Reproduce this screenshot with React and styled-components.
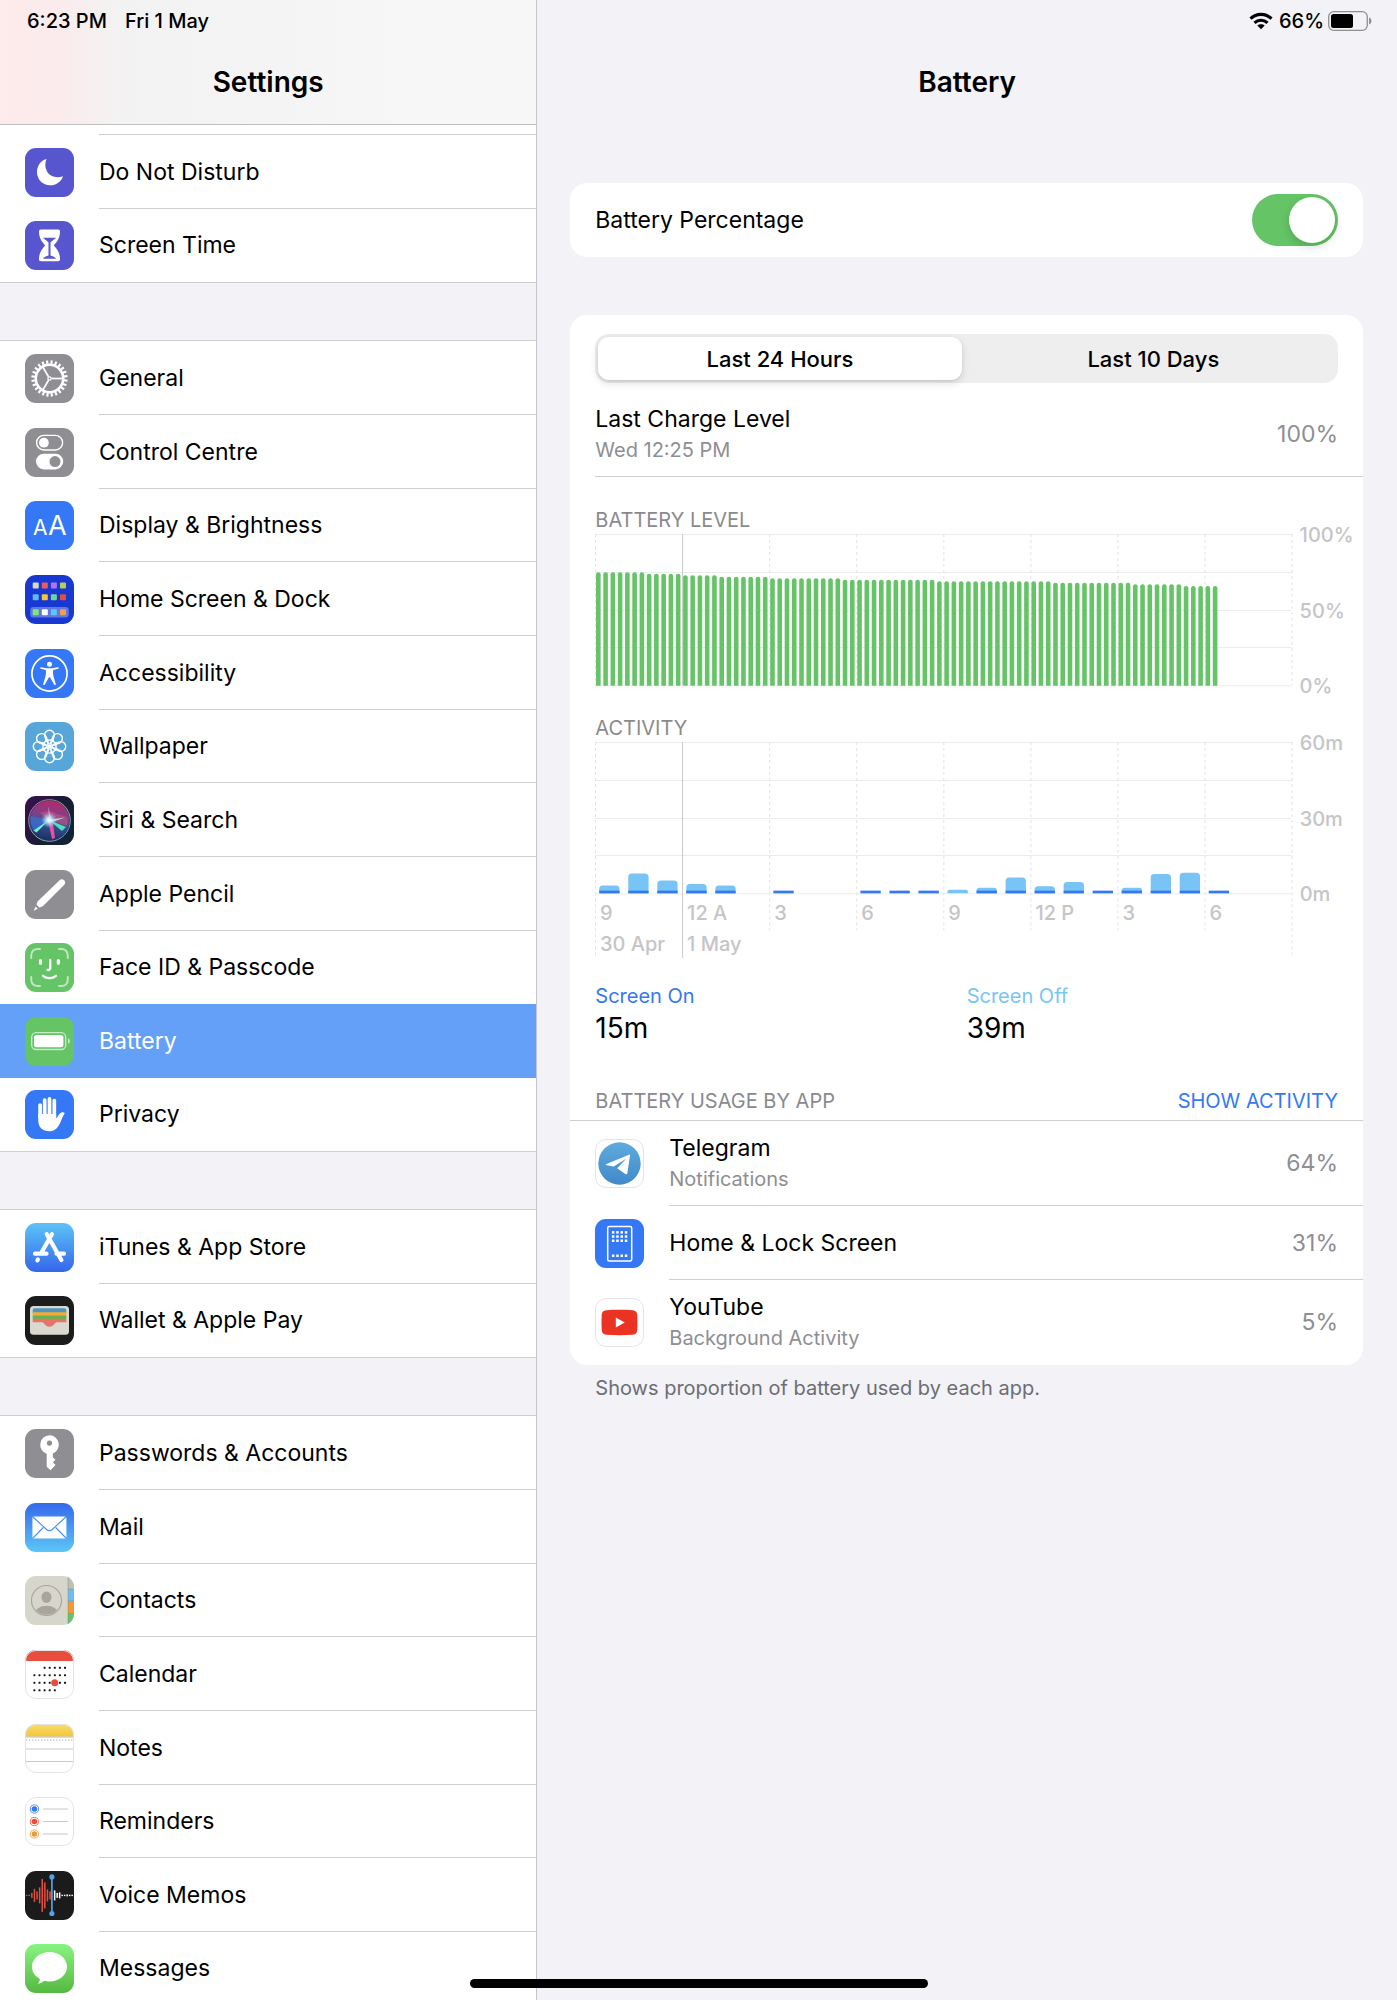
import React, { useState } from "react";
import styled, { createGlobalStyle, css } from "styled-components";

const color = {
  page: "#f2f2f7",
  card: "#ffffff",
  line: "#cfcfd2",
  text: "#000000",
  muted: "#8e8e93",
  axis: "#c5c5c8",
  blue: "#3478f6",
  sky: "#78c5f5",
  green: "#65c466",
  grey: "#8e8e93",
  indigo: "#5856ce",
};

const GlobalStyle = createGlobalStyle`
  *, *::before, *::after { box-sizing: border-box; }
  html, body, #root { height: 100%; }
  body {
    margin: 0;
    background: ${color.page};
    color: ${color.text};
    font-family: Inter, "Liberation Sans", sans-serif;
    font-size: 23px;
    line-height: 32px;
    -webkit-font-smoothing: antialiased;
  }
  h1, h2, p, ul { margin: 0; padding: 0; font: inherit; }
  ul { list-style: none; }
  button { border: 0; padding: 0; background: none; font: inherit; color: inherit; cursor: pointer; }
  a { color: inherit; text-decoration: none; }
`;

/* ---------- icons ---------- */

const IconSvg = styled.svg`
  display: block;
  flex: none;
  width: 49px;
  height: 49px;
`;

function Tile({ fill, border, children }) {
  return (
    <IconSvg viewBox="0 0 49 49" aria-hidden="true">
      <rect width="49" height="49" rx="11" fill={fill} />
      {children}
      {border && (
        <rect x="0.5" y="0.5" width="48" height="48" rx="10.5" fill="none" stroke="#e4e4e6" />
      )}
    </IconSvg>
  );
}

function Fade({ id, from, to }) {
  return (
    <defs>
      <linearGradient id={id} x1="0" y1="0" x2="0" y2="1">
        <stop offset="0" stopColor={from} />
        <stop offset="1" stopColor={to} />
      </linearGradient>
    </defs>
  );
}

function RoundClip({ id }) {
  return (
    <defs>
      <clipPath id={id}>
        <rect width="49" height="49" rx="11" />
      </clipPath>
    </defs>
  );
}

const range = (n) => Array.from({ length: n }, (_, i) => i);

const MoonIcon = () => (
  <Tile fill={color.indigo}>
    <path
      fill="#fff"
      d="M21.5 11C15.5 12.5 12 18 12 24c0 7.500 5.800 13.300 13.200 13.300 5.800 0 11.100-3.700 12.800-9.100-6.500 2.300-13.500.3-16.200-5.200-2-4-1.900-8.200-.3-12z"
    />
  </Tile>
);

const HourglassIcon = () => (
  <Tile fill={color.indigo}>
    <path
      fill="#fff"
      d="M16 8.500h17c1.400 0 2 .8 2 2 0 6-2.200 9.500-6.200 13.900 4 4.300 6.200 7.800 6.200 13.900 0 1.200-.6 2-2 2H16c-1.400 0-2-.8-2-2 0-6.100 2.200-9.600 6.200-13.900-4-4.400-6.200-7.900-6.200-13.900 0-1.200.6-2 2-2z"
    />
    <path
      fill={color.indigo}
      d="M18 16.800h13c-1 1.600-3.600 2.400-5.500 4.700v13c2 .8 4.700 1.400 5.500 3.200H18c.8-1.800 3.500-2.400 5.500-3.200v-13c-1.900-2.300-4.500-3.100-5.500-4.700z"
    />
  </Tile>
);

const GearIcon = () => (
  <Tile fill={color.grey}>
    <g stroke="#fff" fill="none">
      <circle cx="24.500" cy="24.500" r="13.700" strokeWidth="2.600" />
      {range(24).map((i) => (
        <path
          key={i}
          d="M24.500 10.500V6.300"
          strokeWidth="2.200"
          transform={`rotate(${i * 15 + 7} 24.500 24.500)`}
        />
      ))}
      {[90, 210, 330].map((a) => (
        <path
          key={a}
          d="M24.500 22.500V11.500"
          strokeWidth="1.700"
          transform={`rotate(${a} 24.500 24.500)`}
        />
      ))}
      <circle cx="24.500" cy="24.500" r="1.600" strokeWidth="1.300" />
    </g>
  </Tile>
);

const ControlCentreIcon = () => (
  <Tile fill={color.grey}>
    <rect x="11.600" y="7.400" width="26" height="14.600" rx="7.300" fill="none" stroke="#fff" strokeWidth="1.400" />
    <circle cx="18.900" cy="14.700" r="4.900" fill="#fff" />
    <rect x="11" y="25.800" width="27.200" height="15.600" rx="7.800" fill="#fff" />
    <circle cx="30" cy="33.600" r="5.500" fill={color.grey} />
  </Tile>
);

const DisplayIcon = () => (
  <Tile fill={color.blue}>
    <text x="8" y="34" fontSize="21" fill="#fff">A</text>
    <text x="23" y="34" fontSize="27" fill="#fff">A</text>
  </Tile>
);

const HOME_ROWS = [
  { y: 7.4, fills: ["#d9d7cf", "#ee5a60", "#ae74f5", "#b9d04f"] },
  { y: 19.2, fills: ["#5abcf2", "#fbc437", "#6fd39b", "#ec4a3c"] },
  { y: 34.2, fills: ["#7fe67c", "#ffffff", "#5cc6f5", "#f19d52"] },
];

const HomeScreenIcon = () => (
  <Tile fill="#1739d1">
    <rect x="5.300" y="32" width="38.400" height="10.400" rx="3" fill="#fff" opacity="0.320" />
    {HOME_ROWS.map((row) =>
      row.fills.map((f, i) => (
        <rect key={f} x={7.7 + i * 9.1} y={row.y} width="6" height="6" rx="1" fill={f} />
      ))
    )}
  </Tile>
);

const AccessibilityIcon = () => (
  <Tile fill={color.blue}>
    <circle cx="24.500" cy="24.500" r="17.600" fill="none" stroke="#fff" strokeWidth="1.700" />
    <circle cx="24.500" cy="15.200" r="2.500" fill="#fff" />
    <path
      fill="#fff"
      d="M16 18.300l5.800 1h5.400l5.800-1c.9-.1 1.100 1.300.2 1.500l-5 1.300c-.4 2.500-.1 4.500.5 6.900l2.100 7c.3 1.100-1.200 1.600-1.700.5L25 28.300h-1l-4.100 7.200c-.5 1.100-2 .6-1.700-.5l2.100-7c.6-2.400.9-4.400.5-6.900l-5-1.300c-.9-.2-.7-1.600.2-1.500z"
    />
  </Tile>
);

const WallpaperIcon = () => (
  <Tile fill="#57a6d9">
    <g fill="none" stroke="#fff" strokeWidth="1.400">
      {range(8).map((i) => (
        <g key={i} transform={`rotate(${i * 45} 24.500 24.500)`}>
          <circle cx="24.500" cy="13.200" r="4.900" />
          <path d="M24.500 22.300c-3.200-2.300-3.600-5-2.600-6.800M24.500 22.300c3.200-2.300 3.600-5 2.600-6.800" />
        </g>
      ))}
    </g>
    <circle cx="24.500" cy="24.500" r="2" fill="#fff" />
  </Tile>
);

const SiriIcon = () => (
  <IconSvg viewBox="0 0 49 49" aria-hidden="true">
    <defs>
      <linearGradient id="siriBack" x1="0" y1="0" x2="1" y2="0.600">
        <stop offset="0" stopColor="#3b0f52" />
        <stop offset="0.600" stopColor="#1b1c36" />
        <stop offset="1" stopColor="#122338" />
      </linearGradient>
      <linearGradient id="siriRing" x1="0" y1="0" x2="1" y2="1">
        <stop offset="0" stopColor="#b06aa8" />
        <stop offset="0.600" stopColor="#7fc49a" />
        <stop offset="1" stopColor="#5d8fd0" />
      </linearGradient>
      <linearGradient id="siriOrb" x1="0.500" y1="0" x2="0.350" y2="1">
        <stop offset="0" stopColor="#b8286b" />
        <stop offset="0.350" stopColor="#7f4088" />
        <stop offset="0.600" stopColor="#34508f" />
        <stop offset="1" stopColor="#1b2c62" />
      </linearGradient>
      <radialGradient id="siriGlow">
        <stop offset="0" stopColor="#ffffff" />
        <stop offset="0.300" stopColor="#d8f4ff" stopOpacity="0.900" />
        <stop offset="1" stopColor="#7ad8ff" stopOpacity="0" />
      </radialGradient>
    </defs>
    <rect width="49" height="49" rx="11" fill="url(#siriBack)" />
    <circle cx="24.500" cy="24.500" r="20" fill="url(#siriOrb)" />
    <path d="M24 24L15 17c6-3 13-2 17 1l10 3c1 3 1 6 0 9z" fill="#c4567f" opacity="0.600" />
    <path d="M24 24L6 20c-1 6 0 11 3 15z" fill="#3b74d8" opacity="0.700" />
    <path d="M24 24l17 7-4 4z" fill="#4de0c0" />
    <path d="M24 24L8.500 34.500l3 2z" fill="#6ff0d8" />
    <path d="M23 24l4 19 3-1-2-14z" fill="#f04fa0" />
    <path d="M24 23l-1-13 3 11z" fill="#d0a6e8" opacity="0.800" />
    <path d="M25 23.500l15-2-14 5z" fill="#bff5ff" opacity="0.800" />
    <circle cx="24" cy="24" r="8" fill="url(#siriGlow)" />
    <circle cx="24.500" cy="24.500" r="20.800" fill="none" stroke="url(#siriRing)" strokeWidth="1" />
  </IconSvg>
);

const PencilIcon = () => (
  <Tile fill={color.grey}>
    <path
      fill="#fff"
      d="M34.600 10.200c1.200-1.200 3.400-1.100 4.600.1s1.300 3.200.1 4.400L18.300 35.800c-.7.700-1.400 1-2.300 1.300l-1.600.5-2.900-2.900.5-1.600c.3-.9.600-1.600 1.300-2.300zM10.700 36.500l2.200 2.200-4.200 2z"
    />
  </Tile>
);

const FaceIdIcon = () => (
  <Tile fill={color.green}>
    <g fill="none" strokeLinecap="round">
      <path
        stroke="#fff"
        strokeOpacity="0.600"
        strokeWidth="2"
        d="M6.200 15v-2.500c0-4 2.600-6.600 6.600-6.600H15M34 5.900h2.200c4 0 6.600 2.600 6.600 6.600V15M42.800 34v2.500c0 4-2.600 6.600-6.600 6.600H34M15 43.100h-2.200c-4 0-6.600-2.600-6.600-6.600V34"
      />
      <g stroke="#fff">
        <path strokeWidth="3.200" d="M15.500 17.500v2.700M33.300 17.500v2.700" />
        <path strokeWidth="2.300" d="M25.200 17v8c0 1.400-.6 2-2 2h-.7M18 32.800c3.700 3 9.200 3 13 0" />
      </g>
    </g>
  </Tile>
);

const BatteryIcon = () => (
  <Tile fill={color.green}>
    <rect x="6.700" y="15.700" width="34" height="16.800" rx="4.500" fill="none" stroke="#fff" strokeOpacity="0.650" strokeWidth="1.300" />
    <rect x="9" y="18" width="29.400" height="12.200" rx="2.500" fill="#fff" />
    <path d="M43 21.300c2.600 1 2.600 4.600 0 5.600z" fill="#fff" opacity="0.650" />
  </Tile>
);

const HandIcon = () => (
  <Tile fill={color.blue}>
    <g stroke="#fff" strokeWidth="3.700" strokeLinecap="round">
      <path d="M15.100 15v12M19.700 10v15M24.500 8.900V25M29.300 10.600V27" />
    </g>
    <path
      fill="#fff"
      d="M13.250 24h17.900v4.500l3.300-4.600c1.600-2.100 3.900-2.200 5.300-1-3.200 5.200-3.900 9.600-6.500 13.400-2.100 3.300-5 5-9 5-6.800 0-11-4-11-11z"
    />
  </Tile>
);

const AppStoreIcon = () => (
  <Tile fill="url(#appStore)">
    <Fade id="appStore" from="#5cc4f7" to="#3566ea" />
    <g stroke="#fff" strokeWidth="4.200" strokeLinecap="round">
      <path d="M26.900 11.200L16.500 29.500M12.900 36.400l-.5.900M21.800 11.200L36.400 37M10 30.700h11.500M31.500 30.700H39" />
    </g>
  </Tile>
);

const WalletIcon = () => (
  <Tile fill="#1c1c1d">
    <rect x="5" y="10" width="39" height="28.800" rx="3.500" fill="#dbd9cf" />
    <path d="M7.700 14.500c0-1.500.8-2.200 2.200-2.200h29.200c1.400 0 2.200.7 2.200 2.200v3H7.700z" fill="#4b96c3" />
    <rect x="7.700" y="16.200" width="33.600" height="3.400" fill="#f0ab3c" />
    <rect x="7.700" y="19.400" width="33.600" height="3.600" fill="#64b34d" />
    <path d="M7.700 22.700h33.600v3.600H32c-2.700 0-2.800 4.400-7.500 4.400S19.700 26.300 17 26.300H7.700z" fill="#e5746a" />
  </Tile>
);

const KeyIcon = () => (
  <Tile fill={color.grey}>
    <path
      fill="#fff"
      fillRule="evenodd"
      d="M24.500 6.200a9.500 9.500 0 0 1 3.400 18.300v3.700l2.500 2.500-2.500 2.600 2.600 2.700-5 5.300-3.800-3.500V24.700A9.500 9.500 0 0 1 24.500 6.200zm0 5.300a2.600 2.600 0 1 0 0 5.200 2.600 2.600 0 0 0 0-5.200z"
    />
  </Tile>
);

const MailIcon = () => (
  <Tile fill="url(#mail)">
    <Fade id="mail" from="#3569ea" to="#5cc6f7" />
    <rect x="7.400" y="13.400" width="34" height="22" rx="1.500" fill="#fff" />
    <path
      fill="none"
      stroke="#4a92f0"
      strokeWidth="1.100"
      d="M8 14l13 12c2.400 2.400 4.400 2.400 6.800 0l13-12M8 35l10.300-10.500M41 35L30.700 24.500"
    />
  </Tile>
);

const ContactsIcon = () => (
  <IconSvg viewBox="0 0 49 49" aria-hidden="true">
    <RoundClip id="contactsClip" />
    <defs>
      <clipPath id="contactsFace">
        <circle cx="21.500" cy="24.500" r="14.300" />
      </clipPath>
    </defs>
    <g clipPath="url(#contactsClip)">
      <rect width="49" height="49" fill="#d6d6cc" />
      <rect x="43" width="6" height="13" fill="#c0bfb4" />
      <rect x="43" y="13" width="6" height="12" fill="#6fbdf0" />
      <rect x="43" y="25" width="6" height="12.500" fill="#f09a37" />
      <rect x="43" y="37.500" width="6" height="12" fill="#64c466" />
      <path d="M43 0v49M43 13h6M43 25h6M43 37.500h6" stroke="#7d7f78" strokeOpacity="0.500" strokeWidth="0.800" />
    </g>
    <circle cx="21.500" cy="24.500" r="15" fill="none" stroke="#a9a49c" strokeWidth="1.100" />
    <ellipse cx="21.500" cy="21.300" rx="5" ry="5.700" fill="#a9a49c" />
    <ellipse cx="21.500" cy="37.500" rx="11.500" ry="7.700" fill="#a9a49c" clipPath="url(#contactsFace)" />
  </IconSvg>
);

const CALENDAR_ROWS = [
  { y: 17.8, from: 2, to: 6 },
  { y: 25.2, from: 0, to: 6 },
  { y: 32.8, from: 0, to: 6 },
  { y: 40.3, from: 0, to: 4 },
];

const CalendarIcon = () => (
  <Tile fill="#fff" border>
    {CALENDAR_ROWS.map((row) =>
      range(7)
        .filter((i) => i >= row.from && i <= row.to)
        .map((i) => (
          <rect key={`${row.y}-${i}`} x={8.4 + i * 5.1} y={row.y - 1} width="2" height="2" rx="0.600" fill="#111" />
        ))
    )}
    <circle cx="29.700" cy="32.800" r="3.500" fill="#eb4d3d" />
    <path d="M0 11C0 4.900 4.900 0 11 0h27c6.100 0 11 4.900 11 11z" fill="#e94d3d" />
  </Tile>
);

const NotesIcon = () => (
  <Tile fill="#fff" border>
    <Fade id="notes" from="#f9da6c" to="#f3c73a" />
    <path d="M0 12.500V11C0 4.900 4.900 0 11 0h27c6.100 0 11 4.900 11 11v1.500z" fill="url(#notes)" />
    <path d="M0 13h49" stroke="#b9b5a6" strokeWidth="1.200" />
    <path d="M1 16h47" stroke="#c9c9c9" strokeWidth="1.300" strokeDasharray="1.300 1.700" />
    <path d="M0 25h49M0 37.500h49" stroke="#c9c9cb" strokeWidth="1" />
  </Tile>
);

const REMINDERS = [
  { y: 12, fill: "#3478f6" },
  { y: 24.5, fill: "#eb4d3d" },
  { y: 37, fill: "#f09a37" },
];

const RemindersIcon = () => (
  <Tile fill="#fff" border>
    {REMINDERS.map(({ y, fill }) => (
      <g key={fill}>
        <circle cx="9.400" cy={y} r="4.100" fill="none" stroke={fill} strokeWidth="0.800" />
        <circle cx="9.400" cy={y} r="2.800" fill={fill} />
        <path d={`M18 ${y}h25`} stroke="#c8c8ca" strokeWidth="1" />
      </g>
    ))}
  </Tile>
);

const VOICE_RED = [0.6, 0.6, 2.5, 6.5, 4, 8, 16.5, 13, 6, 4];
const VOICE_WHITE = [5, 2.5, 3, 0.7, 0.7, 1, 0.7, 0.7];

const VoiceMemosIcon = () => (
  <Tile fill="#1b1b1c">
    {VOICE_RED.map((h, i) => (
      <rect key={i} x={0.9 + i * 2.6} y={24.4 - h} width="1.500" height={h * 2} fill="#e94d3d" />
    ))}
    {VOICE_WHITE.map((h, i) => (
      <rect key={i} x={28.9 + i * 2.5} y={24.4 - h} width="1.500" height={h * 2} fill="#fff" />
    ))}
    <path d="M26.900 6v36.500" stroke="#4aa3ee" strokeWidth="1.700" />
    <circle cx="26.900" cy="5.900" r="2.600" fill="#4aa3ee" />
    <circle cx="26.900" cy="42.500" r="2.600" fill="#4aa3ee" />
  </Tile>
);

const MessagesIcon = () => (
  <Tile fill="url(#messages)">
    <Fade id="messages" from="#88f481" to="#55b941" />
    <path
      fill="#fff"
      d="M24.500 8c9.700 0 17.500 6.600 17.500 14.800s-7.800 14.700-17.500 14.700c-1.900 0-3.700-.2-5.400-.7-1.700 1.600-3.900 2.800-6.300 3 1.300-1.200 2-3.100 2.100-4.800C9.900 32.300 7 27.900 7 22.800 7 14.600 14.800 8 24.500 8z"
    />
  </Tile>
);

const TelegramIcon = () => (
  <Tile fill="#fff" border>
    <Fade id="telegram" from="#5dabdf" to="#4189c9" />
    <circle cx="24.500" cy="24.500" r="21.200" fill="url(#telegram)" />
    <path
      fill="#fff"
      d="M11.400 25L34 15.700c.7-.3 1.100.1 1 .8l-2.600 17.400c-.2 1.300-1 1.700-2 1l-8.200-5.600 9.200-9.700-12.700 7.900-7.200-1.200c-.9-.3-.9-.9-.1-1.300z"
    />
  </Tile>
);

const HomeLockIcon = () => (
  <Tile fill={color.blue}>
    <rect x="12.700" y="7.500" width="24" height="34.500" rx="1.500" fill="none" stroke="#fff" strokeWidth="1.500" />
    {[13.3, 17.5, 21.7, 36.7].map((y) =>
      range(4).map((i) => (
        <rect key={`${y}-${i}`} x={16.9 + i * 4.3} y={y - 1.2} width="2.500" height="2.500" fill="#fff" />
      ))
    )}
  </Tile>
);

const YouTubeIcon = () => (
  <Tile fill="#fff" border>
    <path
      fill="#ea3323"
      d="M11.500 12.300c8-.6 18-.6 26 0 3.400.3 4.600 1.900 4.800 5.200.3 4.600.3 9.400 0 14-.2 3.300-1.400 4.900-4.800 5.200-8 .6-18 .6-26 0-3.400-.3-4.600-1.900-4.800-5.200-.3-4.600-.3-9.400 0-14 .2-3.300 1.400-4.900 4.800-5.200z"
    />
    <path d="M20.800 19.600v9.800l9-4.900z" fill="#fff" />
  </Tile>
);

const WifiIcon = () => (
  <svg width="24" height="18" viewBox="0 0 24 18" aria-label="Wi-Fi" role="img">
    <g fill="none" stroke="#000" strokeWidth="3.100">
      <path d="M1.500 6.700c5.900-5.800 15.100-5.800 21 0" />
      <path d="M5.500 10.800c3.700-3.500 9.300-3.500 13 0" />
    </g>
    <path d="M12 17.300l-3.700-3.700c2-1.900 5.400-1.900 7.400 0z" fill="#000" />
  </svg>
);

const BatteryStatusIcon = () => (
  <svg width="44" height="20" viewBox="0 0 44 20" aria-hidden="true">
    <rect x="0.700" y="0.700" width="38.600" height="18.600" rx="5" fill="none" stroke="#8f8f93" strokeWidth="1.300" />
    <rect x="3" y="3" width="22" height="14" rx="2.500" fill="#000" />
    <path d="M41 6.500c3.300 1.300 3.300 5.700 0 7z" fill="#8f8f93" />
  </svg>
);

/* ---------- shell ---------- */

const Shell = styled.div`
  position: relative;
  display: grid;
  grid-template-columns: minmax(320px, 5fr) minmax(0, 8fr);
  height: 100vh;
  overflow: hidden;
`;

const Sidebar = styled.nav`
  display: flex;
  flex-direction: column;
  min-height: 0;
  overflow: hidden;
  border-right: 1px solid #c4c4c8;
`;

const PaneHeader = styled.header`
  flex: none;
  ${(p) =>
    p.$tinted &&
    css`
      background: linear-gradient(90deg, #feebeb 0, #fbebed 60px, #f3f2f2 120px, #f4f4f4 260px, #f7f7f7 400px);
      border-bottom: 1px solid #c0c0c3;
    `}
`;

const StatusLine = styled.div`
  display: flex;
  align-items: center;
  justify-content: ${(p) => (p.$end ? "flex-end" : "flex-start")};
  gap: ${(p) => (p.$end ? 6 : 18)}px;
  height: 41px;
  padding: 0 25px 0 27px;
  font-size: 20px;
  font-weight: 500;
`;

const StatusBattery = styled.span`
  display: flex;
  align-items: center;
  gap: 4px;
`;

const Title = styled.h1`
  && {
    height: 83px;
    font-size: 28px;
    font-weight: 600;
    line-height: 83px;
    text-align: center;
  }
`;

const SidebarScroll = styled.div`
  flex: 1;
  min-height: 0;
  overflow: hidden;
`;

const ScrolledRow = styled.div`
  height: 10px;
  background: linear-gradient(${color.line}, ${color.line}) 99px 100% / 100% 1px no-repeat ${color.card};
`;

const Group = styled.ul`
  background: ${color.card};
  border-bottom: 1px solid ${color.line};

  & + & {
    margin-top: 57px;
    border-top: 1px solid ${color.line};
  }
`;

const GroupItem = styled.li`
  height: 74px;

  &:nth-child(3n) {
    height: 73px;
  }

  &:last-child {
    height: 73px;
  }
`;

const ItemLabel = styled.span`
  display: flex;
  flex: 1;
  align-items: center;
  height: 100%;
  border-bottom: 1px solid ${(p) => (p.$plain ? "transparent" : color.line)};
`;

const ItemLink = styled.a`
  display: flex;
  align-items: center;
  gap: 25px;
  height: 100%;
  padding-left: 25px;
  background: ${(p) => (p.$active ? "#649ff8" : "transparent")};
  color: ${(p) => (p.$active ? "#ffffff" : color.text)};
`;

const Main = styled.main`
  min-width: 0;
  overflow: hidden;
`;

const Content = styled.div`
  display: flex;
  flex-direction: column;
  gap: 58px;
  padding: 59px 34px 0 33px;
`;

const Card = styled.section`
  background: ${color.card};
  border-radius: 17px;
  overflow: hidden;
`;

const SettingRow = styled.label`
  display: flex;
  align-items: center;
  justify-content: space-between;
  height: 74px;
  padding: 0 25px;
`;

const Switch = styled.input`
  appearance: none;
  display: flex;
  width: 86px;
  height: 52px;
  margin: 0;
  padding: 3px;
  border-radius: 26px;
  background: #e9e9ea;
  cursor: pointer;

  &::before {
    content: "";
    width: 46px;
    height: 46px;
    border-radius: 50%;
    background: #fff;
    box-shadow: 0 4px 10px rgba(0, 0, 0, 0.15);
  }

  &:checked {
    justify-content: flex-end;
    background: ${color.green};
  }
`;

const Segments = styled.div`
  display: grid;
  grid-template-columns: 1fr 1fr;
  gap: 10px;
  margin: 19px 25px 0;
  padding: 3px;
  border-radius: 14px;
  background: #eeeeee;
`;

const Segment = styled.button`
  && {
    height: 43px;
    border-radius: 11px;
    font-size: 22px;
    font-weight: 500;
    ${(p) =>
      p.$on &&
      css`
        background: #fff;
        box-shadow: 0 3px 9px rgba(0, 0, 0, 0.13), 0 1px 2px rgba(0, 0, 0, 0.08);
      `}
  }
`;

const ChargeRow = styled.div`
  display: flex;
  align-items: center;
  justify-content: space-between;
  margin-left: 25px;
  padding: 20px 25px 11px 0;
  border-bottom: 1px solid ${color.line};
`;

const Primary = styled.p`
  line-height: 32px;
`;

const Secondary = styled.p`
  && {
    color: ${color.muted};
    font-size: 20px;
    line-height: 30px;
  }
`;

const Value = styled.span`
  color: ${color.muted};
`;

const ChartBlock = styled.section`
  margin-left: 25px;
  padding-top: 29px;
`;

const SectionTitle = styled.h2`
  && {
    color: #8a8a8e;
    font-size: 20px;
    line-height: 28px;
    text-transform: uppercase;
  }
`;

const ChartSvg = styled.svg`
  display: block;
  width: 100%;
  height: auto;
  overflow: visible;

  text {
    fill: ${color.axis};
    font-size: 20px;
    font-weight: 500;
  }
`;

const Legend = styled.dl`
  display: grid;
  grid-template-columns: 1fr 1fr;
  margin: 0;
  padding: 24px 25px 0;
`;

const LegendName = styled.dt`
  color: ${(p) => p.$color};
  font-size: 20px;
  line-height: 28px;
`;

const LegendValue = styled.dd`
  margin: 0;
  font-size: 28px;
  line-height: 37px;
`;

const UsageHeader = styled.div`
  display: flex;
  align-items: center;
  justify-content: space-between;
  padding: 40px 25px 5px;
  border-bottom: 1px solid ${color.line};
`;

const TextButton = styled.button`
  && {
    color: ${color.blue};
    font-size: 20px;
    line-height: 28px;
    text-transform: uppercase;
  }
`;

const AppItem = styled.li`
  display: flex;
  align-items: center;
  gap: 25px;
  padding-left: 25px;
`;

const AppBody = styled.div`
  display: flex;
  flex: 1;
  align-items: center;
  justify-content: space-between;
  min-height: 74px;
  padding: 11px 25px 11px 0;
  border-bottom: 1px solid ${color.line};

  ${AppItem}:last-child & {
    border-bottom-color: transparent;
  }
`;

const Footnote = styled.p`
  && {
    padding: 9px 25px 0;
    color: #6d6d72;
    font-size: 20px;
    line-height: 28px;
  }
`;

const HomeIndicator = styled.div`
  position: absolute;
  bottom: 12px;
  left: 50%;
  width: 458px;
  max-width: 60%;
  height: 9px;
  border-radius: 5px;
  background: #000;
  transform: translateX(-50%);
`;

/* ---------- data ---------- */

const GROUPS = [
  [
    ["Do Not Disturb", MoonIcon],
    ["Screen Time", HourglassIcon],
  ],
  [
    ["General", GearIcon],
    ["Control Centre", ControlCentreIcon],
    ["Display & Brightness", DisplayIcon],
    ["Home Screen & Dock", HomeScreenIcon],
    ["Accessibility", AccessibilityIcon],
    ["Wallpaper", WallpaperIcon],
    ["Siri & Search", SiriIcon],
    ["Apple Pencil", PencilIcon],
    ["Face ID & Passcode", FaceIdIcon],
    ["Battery", BatteryIcon],
    ["Privacy", HandIcon],
  ],
  [
    ["iTunes & App Store", AppStoreIcon],
    ["Wallet & Apple Pay", WalletIcon],
  ],
  [
    ["Passwords & Accounts", KeyIcon],
    ["Mail", MailIcon],
    ["Contacts", ContactsIcon],
    ["Calendar", CalendarIcon],
    ["Notes", NotesIcon],
    ["Reminders", RemindersIcon],
    ["Voice Memos", VoiceMemosIcon],
    ["Messages", MessagesIcon],
  ],
];

const APPS = [
  { name: "Telegram", note: "Notifications", share: "64%", Icon: TelegramIcon },
  { name: "Home & Lock Screen", share: "31%", Icon: HomeLockIcon },
  { name: "YouTube", note: "Background Activity", share: "5%", Icon: YouTubeIcon },
];

// [battery percentage, number of consecutive 15-minute samples]
const LEVEL_RUNS = [
  [75, 7], [74, 5], [73, 5], [72, 7], [71, 10], [70, 13],
  [69, 16], [68, 11], [67, 7], [66, 5],
];
const LEVELS = LEVEL_RUNS.flatMap(([level, n]) => range(n).map(() => level));

// One entry per hour: total bar height and whether the screen was on.
const ACTIVITY = [
  [7.5, 1], [19.5, 1], [12.5, 1], [9, 1], [7.5, 1], null, [2.7, 1], null, null,
  [2.7, 1], [2.7, 1], [2.7, 1], [3.5, 0], [5.5, 1], [15.5, 1], [7, 1], [11, 1],
  [2.7, 1], [5.5, 1], [19, 1], [20.4, 1], [2.7, 1],
];

const HOURS = ["9", "12 A", "3", "6", "9", "12 P", "3", "6"];

const PLOT_W = 696;
const PLOT_H = 151;

/* ---------- charts ---------- */

function Grid({ labels, tall = PLOT_H, tick = PLOT_H }) {
  return (
    <g>
      {range(5).map((i) => (
        <path key={i} d={`M0 ${Math.round((i * PLOT_H) / 4) + 0.5}h${PLOT_W}`} stroke="#ececee" />
      ))}
      {range(9).map((i) => (
        <path
          key={i}
          d={`M${i * 87 + 0.5} 0V${i < 2 || i === 8 ? tall : tick}`}
          stroke={i === 1 ? "#c9c9cc" : "#e3e3e5"}
          strokeDasharray={i === 1 ? undefined : "3 3"}
        />
      ))}
      {labels.map((label, i) => (
        <text key={label} x={PLOT_W + 8} y={(i * PLOT_H) / 2 + 8}>
          {label}
        </text>
      ))}
    </g>
  );
}

function LevelChart() {
  return (
    <ChartSvg viewBox="0 0 767 151" role="img" aria-label="Battery level over the last 24 hours">
      <Grid labels={["100%", "50%", "0%"]} />
      {LEVELS.map((level, i) => {
        const h = (level / 100) * PLOT_H;
        const x = 1 + i * 7.25;
        return (
          <path
            key={i}
            fill={color.green}
            d={`M${x} ${PLOT_H + 0.5}v${-(h - 2)}q0-2 2.300-2t2.300 2v${h - 2}z`}
          />
        );
      })}
    </ChartSvg>
  );
}

function ActivityChart() {
  return (
    <ChartSvg viewBox="0 0 767 216" role="img" aria-label="Activity over the last 24 hours">
      <Grid labels={["60m", "30m", "0m"]} tall={216} tick={188} />
      {ACTIVITY.map((bar, i) => {
        if (!bar) return null;
        const [h, on] = bar;
        const x = 4.2 + i * 29;
        const r = Math.min(3.5, h / 2);
        return (
          <g key={i}>
            {(h > 3 || !on) && (
              <path
                fill={color.sky}
                d={`M${x} ${PLOT_H}v${r - h}q0 ${-r} ${r} ${-r}h${20.3 - 2 * r}q${r} 0 ${r} ${r}v${h - r}z`}
              />
            )}
            {on === 1 && <rect x={x} y={PLOT_H - 2.5} width="20.300" height="2.700" fill={color.blue} />}
          </g>
        );
      })}
      {HOURS.map((hour, i) => (
        <text key={i} x={i * 87 + 5} y="178">
          {hour}
        </text>
      ))}
      <text x="5" y="209">30 Apr</text>
      <text x="92" y="209">1 May</text>
    </ChartSvg>
  );
}

/* ---------- page ---------- */

const slug = (name) => "#" + name.toLowerCase().replace(/[^a-z]+/g, "-");

export default function App() {
  const [period, setPeriod] = useState("Last 24 Hours");
  const current = "Battery";

  return (
    <>
      <GlobalStyle />
      <Shell>
        <Sidebar aria-label="Settings">
          <PaneHeader $tinted>
            <StatusLine>
              <span>6:23 PM</span>
              <span>Fri 1 May</span>
            </StatusLine>
            <Title>Settings</Title>
          </PaneHeader>
          <SidebarScroll>
            <ScrolledRow />
            {GROUPS.map((items, g) => (
              <Group key={g}>
                {items.map(([name, Icon], i) => {
                  const next = items[i + 1];
                  const plain = !next || name === current || next[0] === current;
                  return (
                    <GroupItem key={name}>
                      <ItemLink
                        href={slug(name)}
                        $active={name === current}
                        aria-current={name === current ? "page" : undefined}
                      >
                        <Icon />
                        <ItemLabel $plain={plain}>{name}</ItemLabel>
                      </ItemLink>
                    </GroupItem>
                  );
                })}
              </Group>
            ))}
          </SidebarScroll>
        </Sidebar>

        <Main>
          <PaneHeader>
            <StatusLine $end>
              <WifiIcon />
              <StatusBattery>
                <span>66%</span>
                <BatteryStatusIcon />
              </StatusBattery>
            </StatusLine>
            <Title>Battery</Title>
          </PaneHeader>
          <Content>
            <Card>
              <SettingRow>
                <span>Battery Percentage</span>
                <Switch type="checkbox" role="switch" defaultChecked />
              </SettingRow>
            </Card>
            <div>
              <Card>
                <Segments>
                  {["Last 24 Hours", "Last 10 Days"].map((name) => (
                    <Segment
                      key={name}
                      type="button"
                      $on={name === period}
                      aria-pressed={name === period}
                      onClick={() => setPeriod(name)}
                    >
                      {name}
                    </Segment>
                  ))}
                </Segments>
                <ChargeRow>
                  <div>
                    <Primary>Last Charge Level</Primary>
                    <Secondary>Wed 12:25 PM</Secondary>
                  </div>
                  <Value>100%</Value>
                </ChargeRow>
                <ChartBlock>
                  <SectionTitle>Battery Level</SectionTitle>
                  <LevelChart />
                </ChartBlock>
                <ChartBlock>
                  <SectionTitle>Activity</SectionTitle>
                  <ActivityChart />
                </ChartBlock>
                <Legend>
                  <div>
                    <LegendName $color={color.blue}>Screen On</LegendName>
                    <LegendValue>15m</LegendValue>
                  </div>
                  <div>
                    <LegendName $color={color.sky}>Screen Off</LegendName>
                    <LegendValue>39m</LegendValue>
                  </div>
                </Legend>
                <UsageHeader>
                  <SectionTitle>Battery Usage by App</SectionTitle>
                  <TextButton type="button">Show Activity</TextButton>
                </UsageHeader>
                <ul>
                  {APPS.map(({ name, note, share, Icon }) => (
                    <AppItem key={name}>
                      <Icon />
                      <AppBody>
                        <div>
                          <Primary>{name}</Primary>
                          {note && <Secondary>{note}</Secondary>}
                        </div>
                        <Value>{share}</Value>
                      </AppBody>
                    </AppItem>
                  ))}
                </ul>
              </Card>
              <Footnote>Shows proportion of battery used by each app.</Footnote>
            </div>
          </Content>
        </Main>
        <HomeIndicator />
      </Shell>
    </>
  );
}
